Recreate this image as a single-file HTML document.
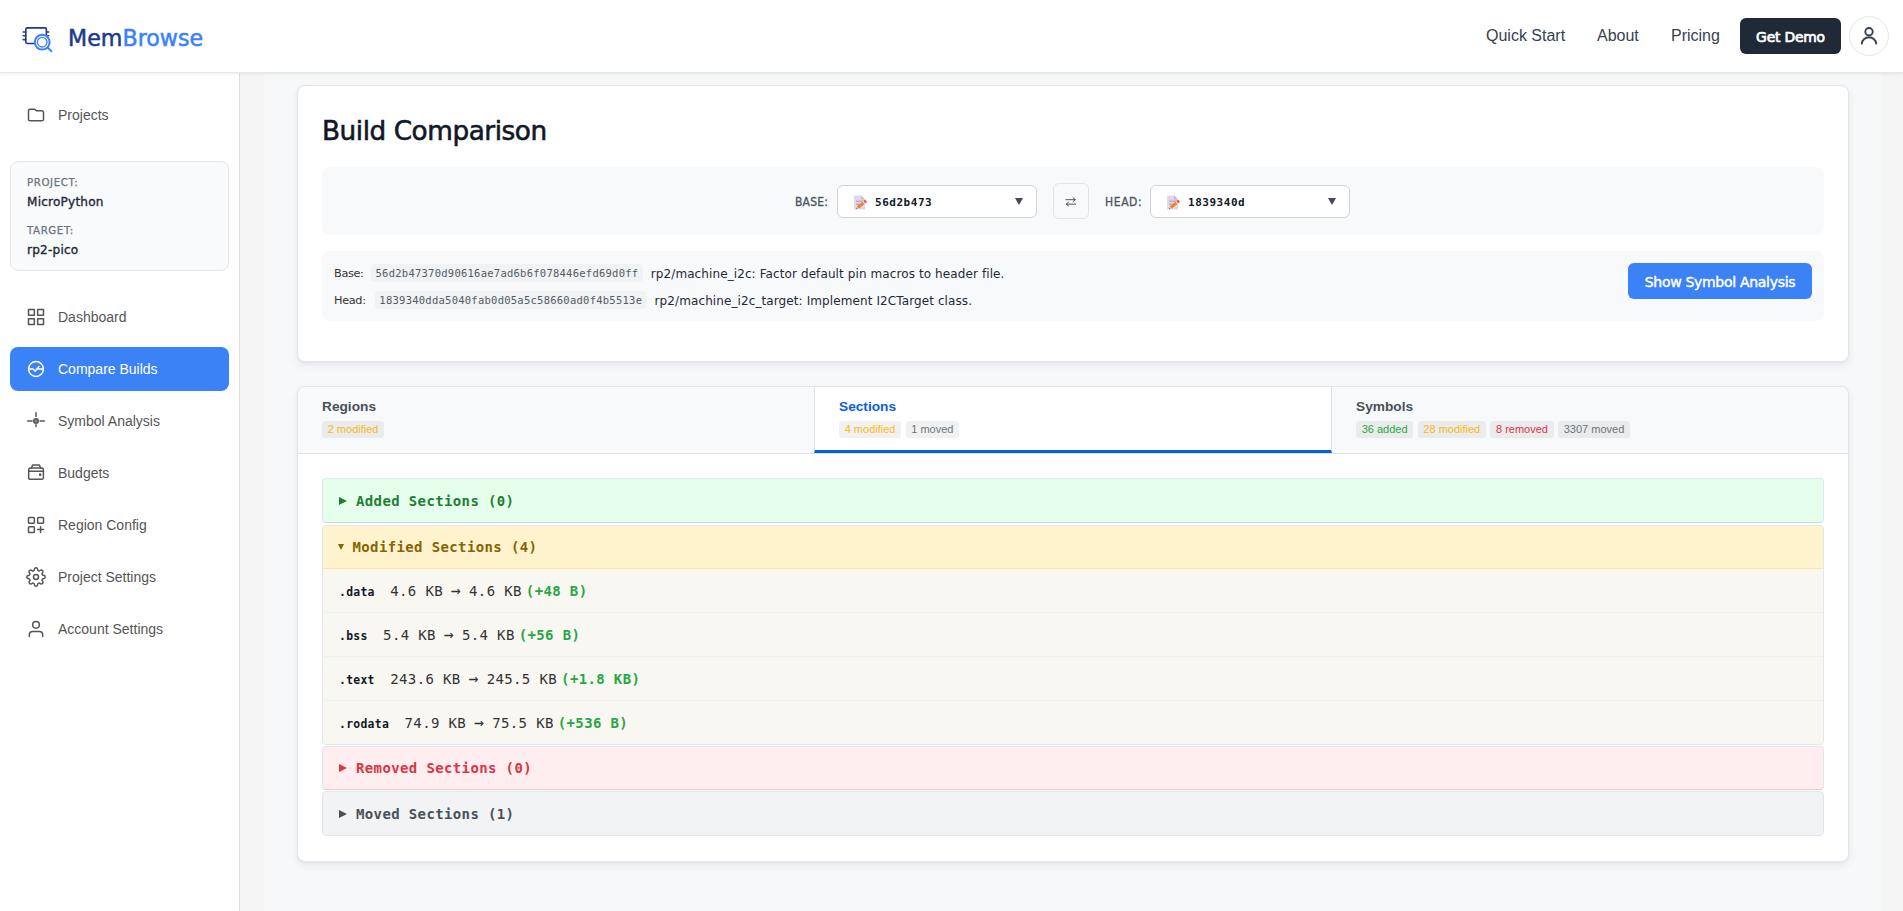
<!DOCTYPE html>
<html lang="en">
<head>
<meta charset="utf-8">
<title>MemBrowse - Build Comparison</title>
<style>
*{box-sizing:border-box;margin:0;padding:0}
html,body{width:1903px;height:911px;overflow:hidden}
body{font-family:"Liberation Sans",sans-serif;background:#f5f5f5;color:#111827;position:relative}
.ui{font-family:"DejaVu Sans Condensed","DejaVu Sans","Liberation Sans",sans-serif}
.mono{font-family:"DejaVu Sans Mono","Liberation Mono",monospace}

/* header */
header{position:absolute;left:0;top:0;width:1903px;height:73px;background:#fff;border-bottom:1px solid #e5e7eb;box-shadow:0 1px 3px rgba(15,23,42,.08);z-index:5}
.logo{position:absolute;left:20px;top:21px;width:34px;height:34px}
.brand{position:absolute;left:68px;top:21px;font-family:"DejaVu Sans","Liberation Sans",sans-serif;font-size:22.200px;line-height:34px;color:#1e3a8a;-webkit-text-stroke:.5px #1e3a8a;white-space:nowrap}
.brand b{font-weight:normal;color:#3b82f6;-webkit-text-stroke:.5px #3b82f6}
.nav a{position:absolute;top:26px;font-size:16px;line-height:20px;color:#374151;white-space:nowrap}
.demo{position:absolute;left:1740px;top:18px;width:101px;height:36px;border-radius:6px;background:#1f2937;color:#fff;font-family:"DejaVu Sans","Liberation Sans",sans-serif;font-size:13.9px;line-height:38px;text-align:center;-webkit-text-stroke:.7px #fff;letter-spacing:-.2px}
.user{position:absolute;left:1849px;top:16px;width:40px;height:40px;border-radius:50%;border:1px solid #e5e7eb;background:#fff}
.user svg{position:absolute;left:8px;top:8px}

/* sidebar */
aside{position:absolute;left:0;top:73px;width:240px;height:838px;background:#fff;border-right:1px solid #e0e0e0}
.item{position:absolute;left:10px;width:219px;height:44px;border-radius:8px;font-size:14px;line-height:44px;color:#555;padding-left:48px;white-space:nowrap}
.item svg{position:absolute;left:16px;top:12px;width:20px;height:20px;stroke:#555;fill:none;stroke-width:1.8;stroke-linecap:round;stroke-linejoin:round}
.item.active{background:#3b82f6;color:#fff}
.item.active svg{stroke:#fff}
.proj{position:absolute;left:10px;top:88px;width:219px;height:110px;border-radius:8px;background:#f8fafc;border:1px solid #e5e7eb}
.proj .l{position:absolute;left:16px;font-family:"DejaVu Sans","Liberation Sans",sans-serif;font-size:10.2px;line-height:14px;color:#6b7280;letter-spacing:.62px;-webkit-text-stroke:.25px #6b7280}
.proj .v{position:absolute;left:16px;font-family:"DejaVu Sans","Liberation Sans",sans-serif;font-size:12.1px;line-height:16px;color:#1f2937;letter-spacing:.2px;-webkit-text-stroke:.35px #1f2937}

/* main */
main{position:absolute;left:264px;top:73px;width:1617px;height:838px;background:#f6f8fa}
.card{position:absolute;left:33px;width:1552px;background:#fff;border:1px solid #e2e6ea;border-radius:8px;box-shadow:0 4px 10px rgba(15,23,42,.06),0 1px 3px rgba(15,23,42,.05)}

/* card 1 */
.title{position:absolute;left:24px;top:26.500px;font-family:"DejaVu Sans","Liberation Sans",sans-serif;font-size:26.300px;line-height:36px;color:#111827;-webkit-text-stroke:.6px #111827;letter-spacing:-.45px;white-space:nowrap}
.selrow{position:absolute;left:24px;top:81px;width:1502px;height:67.500px;border-radius:8px;background:#f8f9fa}
.lab{position:absolute;top:25.500px;font-size:12px;line-height:18px;color:#4b5563;-webkit-text-stroke:.3px #4b5563;letter-spacing:.2px;white-space:nowrap}
.sel{position:absolute;top:17.500px;width:200px;height:33px;border:1px solid #cfd4da;border-radius:6px;background:#fff}
.sel svg{position:absolute;left:15px;top:9px}
.sel .h{position:absolute;left:37px;top:9px;font-size:11px;letter-spacing:.53px;line-height:16px;font-weight:bold;color:#111827;white-space:nowrap}
.sel .a{position:absolute;left:177px;top:12.500px;width:0;height:0;border-left:4.200px solid transparent;border-right:4.200px solid transparent;border-top:7.200px solid #434a56}
.swap{position:absolute;left:731px;top:16px;width:36px;height:36px;border:1px solid #e1e5ea;border-radius:6px;background:#f8f9fa}
.swap svg{position:absolute;left:11.200px;top:13px}
.inforow{position:absolute;left:24px;top:165px;width:1502px;height:70px;border-radius:8px;background:#f8f9fa}
.il{position:absolute;left:12px;height:18px;white-space:nowrap;font-size:12px;line-height:18px;color:#374151}
.il .k{display:inline-block;vertical-align:top;font-family:"DejaVu Sans","Liberation Sans",sans-serif;font-size:11.300px;letter-spacing:-.35px;color:#333}
.il .hash{display:inline-block;vertical-align:top;margin-left:0;padding:0 4.350px;position:relative;top:-1px;height:17.500px;border-radius:4px;background:#f0f2f4;font-size:10.500px;letter-spacing:.25px;line-height:19px;color:#545b64}
.il .msg{display:inline-block;vertical-align:top;margin-left:8px;font-family:"DejaVu Sans","Liberation Sans",sans-serif;font-size:12px;line-height:18px;letter-spacing:.1px;color:#1f2937}
.btn{position:absolute;left:1306px;top:12px;width:184px;height:36px;border-radius:6px;background:#3b82f6;color:#fff;font-family:"DejaVu Sans","Liberation Sans",sans-serif;font-size:14px;letter-spacing:-.3px;line-height:38px;text-align:center;white-space:nowrap;-webkit-text-stroke:.45px #fff}

/* card 2 */
.tabs{position:absolute;left:0;top:0;width:1550px;height:67px;background:#f8f9fa;border-bottom:1px solid #dee2e6;border-radius:7px 7px 0 0}
.tab{position:absolute;top:0;height:66px}
.tab .t{position:absolute;left:24px;top:11px;font-size:13.700px;line-height:18px;font-weight:bold;color:#495057;white-space:nowrap}
.tab .bs{position:absolute;left:24px;top:34px;white-space:nowrap;font-size:0}
.bd{display:inline-block;height:17px;padding:0 5.700px;margin-right:4.400px;border-radius:3px;background:rgba(0,0,0,.055);font-size:11px;line-height:17px}
.tab.on{background:#fff;border-left:1px solid #dee2e6;border-right:1px solid #dee2e6;border-bottom:3px solid #0b5ed7}
.tab.on .t{color:#0b5ed7;left:24px}
.am{color:#fbb917}.gr{color:#28a745}.rd{color:#dc3545}.gy{color:#6c757d}
.sec{position:absolute;left:24px;width:1502px;border:1px solid #e2e7ee;border-radius:4px;overflow:hidden}
.sum{position:relative;height:43px;font-size:14px;letter-spacing:.37px;line-height:43px;font-weight:bold;white-space:nowrap}
.sum i{position:absolute;left:16px;top:17.500px;width:0;height:0;border-top:4.300px solid transparent;border-bottom:4.300px solid transparent;border-left:8.400px solid currentColor}
.sum i.dn{left:15px;top:18.500px;border-left:3.400px solid transparent;border-right:3.400px solid transparent;border-top:6.500px solid currentColor;border-bottom:0}
.sum span{position:absolute;left:33px;top:0}
.row{position:relative;height:44px;background:#f8f7f2;border-top:1px solid #eef0f1;white-space:nowrap;padding-left:16px;padding-top:1px;line-height:43px;font-size:14px}
.row .n{font-size:11.400px;letter-spacing:.29px;font-weight:bold;color:#111827;margin-right:15.500px}
.row .s{font-size:14px;letter-spacing:.37px;color:#333}
.row .ar{display:inline-block;width:8.430px;letter-spacing:0;font-size:16.500px;line-height:10px;text-align:center;position:relative;top:-.5px;text-indent:-.800px}
.row .d{font-weight:bold;color:#28a745;margin-left:4px}
</style>
</head>
<body>
<header>
  <svg class="logo" viewBox="0 0 34 34" fill="none">
    <g stroke="#1e3a8a" stroke-width="1.6" stroke-linecap="round">
      <rect x="5.8" y="6.9" width="20.6" height="15.6" rx="1.6"/>
      <path d="M3.2 11h2.4M3.2 14.8h2.4M3.2 18.6h2.4M26.6 11h2.2M26.6 14.8h2.2"/>
    </g>
    <circle cx="22.2" cy="21.2" r="8.3" fill="#fff"/>
    <circle cx="22.2" cy="21.2" r="7.4" stroke="#3b82f6" stroke-width="2"/>
    <circle cx="22.2" cy="21.2" r="4.8" stroke="#3b82f6" stroke-width="1.3"/>
    <path d="M27.8 26.8l3.6 3.4" stroke="#3b82f6" stroke-width="1.9" stroke-linecap="round"/>
  </svg>
  <div class="brand ui">Mem<b>Browse</b></div>
  <div class="nav">
    <a style="left:1486px">Quick Start</a>
    <a style="left:1597px">About</a>
    <a style="left:1671px">Pricing</a>
  </div>
  <div class="demo ui">Get Demo</div>
  <div class="user"><svg width="22" height="22" viewBox="0 0 22 22" fill="none" stroke="#374151" stroke-width="1.900" stroke-linecap="round" stroke-linejoin="round"><circle cx="11" cy="6.700" r="3.700"/><path d="M3.800 18.600a7.260 7.260 0 0 1 14.400 0"/></svg></div>
</header>

<aside>
  <div class="item" style="top:20px"><svg viewBox="0 0 24 24"><path d="M3 7v10a2 2 0 0 0 2 2h14a2 2 0 0 0 2-2V9a2 2 0 0 0-2-2h-6.500l-2-2H5a2 2 0 0 0-2 2z"/></svg>Projects</div>
  <div class="proj ui">
    <div class="l" style="top:14px">PROJECT:</div>
    <div class="v" style="top:32px">MicroPython</div>
    <div class="l" style="top:62px">TARGET:</div>
    <div class="v" style="top:80px">rp2-pico</div>
  </div>
  <div class="item" style="top:222px"><svg viewBox="0 0 24 24"><rect x="3" y="3" width="7" height="7"/><rect x="14" y="3" width="7" height="7"/><rect x="14" y="14" width="7" height="7"/><rect x="3" y="14" width="7" height="7"/></svg>Dashboard</div>
  <div class="item active" style="top:274px"><svg viewBox="0 0 24 24"><circle cx="12" cy="12" r="8.900"/><path d="M3.200 12h5.400l2.300 2.600 4.500-5.400M14.500 12h6.300"/></svg>Compare Builds</div>
  <div class="item" style="top:326px"><svg viewBox="0 0 24 24"><circle cx="12" cy="12" r="2.700" fill="#8a8a8a"/><path d="M12 2v4.600M12 16.600v1.900M2 12h5.300M16.900 12h5.100"/></svg>Symbol Analysis</div>
  <div class="item" style="top:378px"><svg viewBox="0 0 24 24"><rect x="3.200" y="6" width="17.700" height="13.600" rx="2"/><path d="M3.200 10h17.700M6.400 6l1.600-3.500h8l1.600 3.500"/><circle cx="17" cy="14" r=".7" fill="#555"/></svg>Budgets</div>
  <div class="item" style="top:430px"><svg viewBox="0 0 24 24"><rect x="3" y="3" width="7" height="7" rx="1"/><rect x="14" y="3" width="7" height="7" rx="1"/><rect x="3" y="14" width="7" height="7" rx="1"/><path d="M17.500 14v7M14 17.500h7"/></svg>Region Config</div>
  <div class="item" style="top:482px"><svg viewBox="0 0 24 24"><circle cx="12" cy="12" r="3"/><path d="M19.400 15a1.650 1.650 0 0 0 .33 1.820l.06.06a2 2 0 0 1 0 2.830 2 2 0 0 1-2.830 0l-.06-.06a1.650 1.650 0 0 0-1.820-.33 1.650 1.650 0 0 0-1 1.510V21a2 2 0 0 1-2 2 2 2 0 0 1-2-2v-.09A1.650 1.650 0 0 0 9 19.400a1.650 1.650 0 0 0-1.820.33l-.06.06a2 2 0 0 1-2.830 0 2 2 0 0 1 0-2.830l.06-.06a1.650 1.650 0 0 0 .33-1.820 1.650 1.650 0 0 0-1.510-1H3a2 2 0 0 1-2-2 2 2 0 0 1 2-2h.09A1.650 1.650 0 0 0 4.600 9a1.650 1.650 0 0 0-.33-1.820l-.06-.06a2 2 0 0 1 0-2.830 2 2 0 0 1 2.830 0l.06.06a1.650 1.650 0 0 0 1.820.33H9a1.650 1.650 0 0 0 1-1.510V3a2 2 0 0 1 2-2 2 2 0 0 1 2 2v.09a1.650 1.650 0 0 0 1 1.510 1.650 1.650 0 0 0 1.820-.33l.06-.06a2 2 0 0 1 2.830 0 2 2 0 0 1 0 2.830l-.06.06a1.650 1.650 0 0 0-.33 1.820V9a1.650 1.650 0 0 0 1.510 1H21a2 2 0 0 1 2 2 2 2 0 0 1-2 2h-.09a1.650 1.650 0 0 0-1.510 1z"/></svg>Project Settings</div>
  <div class="item" style="top:534px"><svg viewBox="0 0 24 24"><path d="M20 21v-2a4 4 0 0 0-4-4H8a4 4 0 0 0-4 4v2"/><circle cx="12" cy="7" r="4"/></svg>Account Settings</div>
</aside>

<main>
  <div class="card" style="top:12px;height:277px">
    <div class="title ui">Build Comparison</div>
    <div class="selrow">
      <div class="lab ui" style="left:473px">BASE:</div>
      <div class="sel" style="left:515px">
        <svg width="15" height="15" viewBox="0 0 15 15"><path d="M1.100.5h6.900L12 4.500V14.600H1.100z" fill="#e0d8e8"/><path d="M8 .5v4h4z" fill="#c3b8cf"/><path d="M3 6.300h7.300M3 9.300h7.300" stroke="#b9adc2" stroke-width="1.600"/><path d="M3.100 13.900L3.860 11.340 5.750 13.670z" fill="#e9c9a0"/><path d="M3.100 13.900l.35-1.150.82 1.020z" fill="#5b3a3a"/><path d="M3.860 11.340L9.600 6.700 11.500 9 5.750 13.670z" fill="#f5822a"/><path d="M9.600 6.700l.8-.65L12.280 8.390l-.78.610z" fill="#e6e2f2"/><path d="M10.400 6.050l1.200-1a.8.800 0 0 1 1.100.1l.9 1.100a.8.800 0 0 1-.1 1.100l-1.220 1.040z" fill="#f4523b"/></svg>
        <div class="h mono">56d2b473</div><div class="a"></div>
      </div>
      <div class="swap"><svg width="11.600" height="9.800" viewBox="0 0 13 11" fill="none" stroke="#434a56" stroke-width="1.050" stroke-linecap="round" stroke-linejoin="round"><path d="M1 3h10.500M9 .8L11.500 3 9 5.200M12 8H1.500M4 5.800L1.500 8 4 10.200"/></svg></div>
      <div class="lab ui" style="left:783px;letter-spacing:.6px">HEAD:</div>
      <div class="sel" style="left:828px">
        <svg width="15" height="15" viewBox="0 0 15 15"><path d="M1.100.5h6.900L12 4.500V14.600H1.100z" fill="#e0d8e8"/><path d="M8 .5v4h4z" fill="#c3b8cf"/><path d="M3 6.300h7.300M3 9.300h7.300" stroke="#b9adc2" stroke-width="1.600"/><path d="M3.100 13.900L3.860 11.340 5.750 13.670z" fill="#e9c9a0"/><path d="M3.100 13.900l.35-1.150.82 1.020z" fill="#5b3a3a"/><path d="M3.860 11.340L9.600 6.700 11.500 9 5.750 13.670z" fill="#f5822a"/><path d="M9.600 6.700l.8-.65L12.280 8.390l-.78.610z" fill="#e6e2f2"/><path d="M10.400 6.050l1.200-1a.8.800 0 0 1 1.100.1l.9 1.100a.8.800 0 0 1-.1 1.100l-1.220 1.040z" fill="#f4523b"/></svg>
        <div class="h mono">1839340d</div><div class="a"></div>
      </div>
    </div>
    <div class="inforow">
      <div class="il" style="top:14px"><span class="k" style="width:37.200px">Base:</span><span class="hash mono">56d2b47370d90616ae7ad6b6f078446efd69d0ff</span><span class="msg ui">rp2/machine_i2c: Factor default pin macros to header file.</span></div>
      <div class="il" style="top:41px"><span class="k" style="width:41px">Head:</span><span class="hash mono">1839340dda5040fab0d05a5c58660ad0f4b5513e</span><span class="msg ui">rp2/machine_i2c_target: Implement I2CTarget class.</span></div>
      <div class="btn ui">Show Symbol Analysis</div>
    </div>
  </div>

  <div class="card" style="top:313px;height:476px">
    <div class="tabs">
      <div class="tab" style="left:0;width:517px"><div class="t">Regions</div><div class="bs"><span class="bd am">2 modified</span></div></div>
      <div class="tab on" style="left:516px;width:518px"><div class="t">Sections</div><div class="bs"><span class="bd am">4 modified</span><span class="bd gy">1 moved</span></div></div>
      <div class="tab" style="left:1034px;width:516px"><div class="t">Symbols</div><div class="bs"><span class="bd gr">36 added</span><span class="bd am">28 modified</span><span class="bd rd">8 removed</span><span class="bd gy">3307 moved</span></div></div>
    </div>
    <div class="sec mono" style="top:91px;background:#e6ffed;color:#1e7e34;border-bottom-color:#c3e6cb"><div class="sum"><i style="top:18px"></i><span style="top:1px">Added Sections (0)</span></div></div>
    <div class="sec mono" style="top:137.500px;background:#fff3cd;color:#856404"><div class="sum" style="height:42.500px;line-height:43px"><i class="dn"></i><span style="left:29.500px">Modified Sections (4)</span></div>
      <div class="row" style="border-top-color:#ffe8a1"><span class="n">.data</span><span class="s">4.6 KB <span class="ar">→</span> 4.6 KB<span class="d">(+48 B)</span></span></div>
      <div class="row"><span class="n">.bss</span><span class="s">5.4 KB <span class="ar">→</span> 5.4 KB<span class="d">(+56 B)</span></span></div>
      <div class="row"><span class="n">.text</span><span class="s">243.6 KB <span class="ar">→</span> 245.5 KB<span class="d">(+1.8 KB)</span></span></div>
      <div class="row"><span class="n">.rodata</span><span class="s">74.9 KB <span class="ar">→</span> 75.5 KB<span class="d">(+536 B)</span></span></div>
    </div>
    <div class="sec mono" style="top:359px;background:#ffeef0;color:#dc3545;border-bottom-color:#f5c6cb"><div class="sum" style="height:42px;line-height:42px"><i style="top:17px"></i><span>Removed Sections (0)</span></div></div>
    <div class="sec mono" style="top:404px;background:#f1f3f5;color:#495057"><div class="sum" style="height:43px"><i style="top:18px"></i><span style="top:1px">Moved Sections (1)</span></div></div>
  </div>
</main>
</body>
</html>
